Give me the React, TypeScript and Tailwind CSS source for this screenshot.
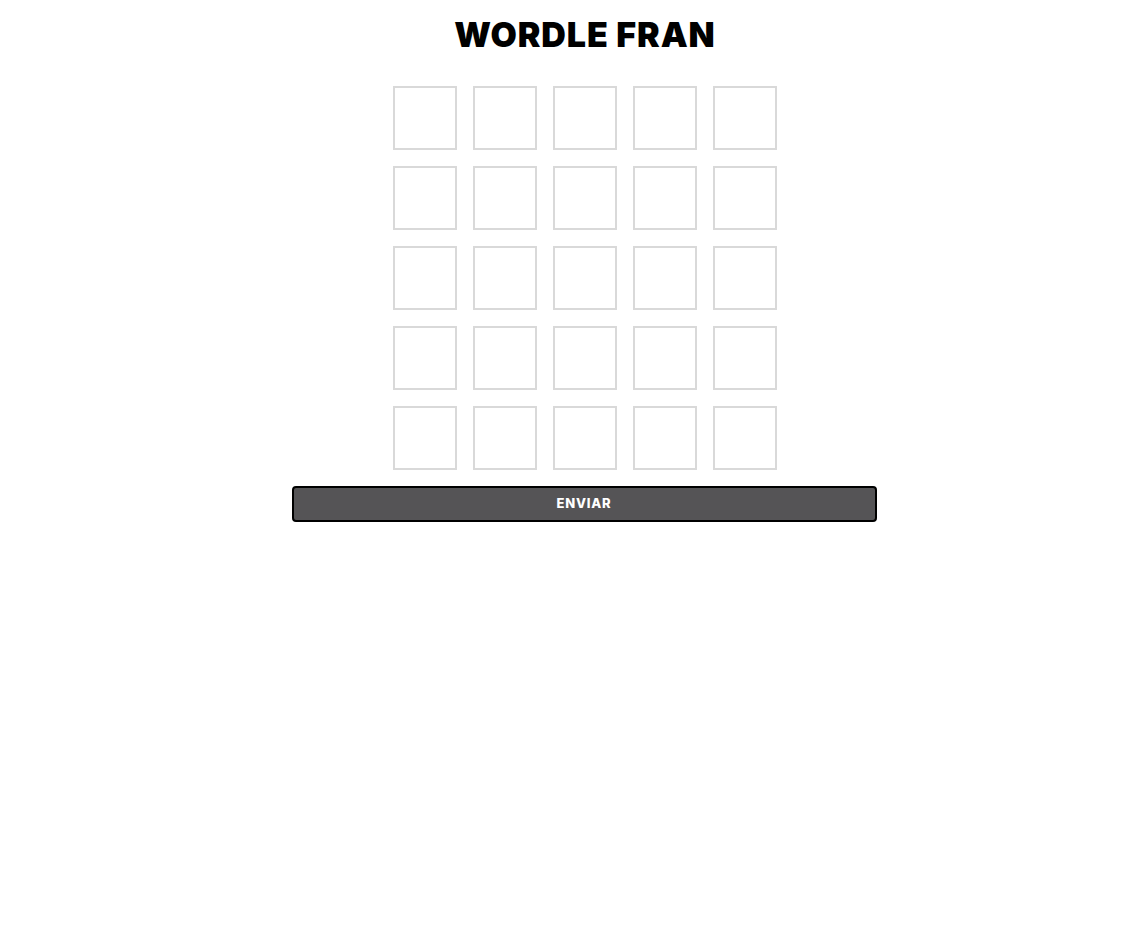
import React from 'react';

const ROWS = 5;
const COLS = 5;

export default function App() {
  return (
    <div className="min-h-screen bg-white" style={{ fontFamily: 'Inter, "Open Sans", sans-serif' }}>
      <div className="flex flex-col items-center pl-[22px]">
        <h1 className="mt-[14px] text-[34px] leading-[42px] font-black tracking-[0.9px] text-black">
          WORDLE FRAN
        </h1>

        <div className="mt-[30px] flex flex-col gap-4">
          {Array.from({ length: ROWS }).map((_, r) => (
            <div key={r} className="flex gap-4">
              {Array.from({ length: COLS }).map((_, c) => (
                <div key={c} className="w-16 h-16 border-2 border-[#d9d9d9]" />
              ))}
            </div>
          ))}
        </div>

        <button className="mt-4 mr-[2px] w-[585px] h-9 rounded bg-[#555456] border-2 border-black text-white text-[13px] font-extrabold tracking-[0.06em]">
          ENVIAR
        </button>
      </div>
    </div>
  );
}
